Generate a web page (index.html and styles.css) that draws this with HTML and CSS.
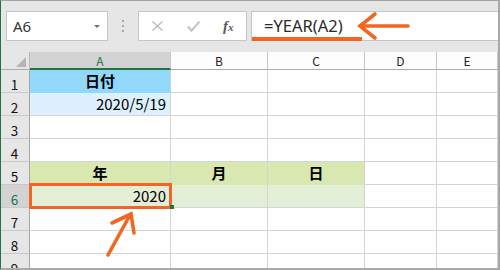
FILE: index.html
```html
<!DOCTYPE html>
<html lang="ja">
<head>
	<meta charset="UTF-8">
	<title>YEAR関数</title>
	<link rel="stylesheet" href="styles.css">
</head>
<body>
<div class="window">
	<!-- name box + formula bar -->
	<div class="toolbar">
		<div class="namebox">
			<span>A6</span>
			<span class="drop"></span>
		</div>
		<div class="grip"><i></i><i></i><i></i></div>
		<div class="fbuttons">
			<svg class="ico" width="11" height="10" viewBox="0 0 11 10"><path d="M0.5 0.5 L10.5 9.5 M10.5 0.5 L0.5 9.5" stroke="#b8b8b8" stroke-width="1.3" fill="none"/></svg>
			<svg class="ico" width="13" height="11" viewBox="0 0 13 11"><path d="M0.8 5.5 L4.6 9.6 L12.4 0.6" stroke="#c4c4c4" stroke-width="2.2" fill="none"/></svg>
			<span class="fx">f<small>x</small></span>
		</div>
		<div class="formula">=YEAR(A2)</div>
	</div>

	<!-- sheet -->
	<div class="sheet">
		<div class="corner"><span class="tri"></span></div>
		<div class="ch active">A</div>
		<div class="ch">B</div>
		<div class="ch">C</div>
		<div class="ch">D</div>
		<div class="ch">E</div>

		<div class="rh">1</div>
		<div class="cell blue bold center">日付</div>
		<div class="cell"></div><div class="cell"></div><div class="cell"></div><div class="cell"></div>

		<div class="rh">2</div>
		<div class="cell lblue right">2020/5/19</div>
		<div class="cell"></div><div class="cell"></div><div class="cell"></div><div class="cell"></div>

		<div class="rh">3</div>
		<div class="cell"></div><div class="cell"></div><div class="cell"></div><div class="cell"></div><div class="cell"></div>

		<div class="rh">4</div>
		<div class="cell"></div><div class="cell"></div><div class="cell"></div><div class="cell"></div><div class="cell"></div>

		<div class="rh">5</div>
		<div class="cell green bold center">年</div>
		<div class="cell green bold center">月</div>
		<div class="cell green bold center">日</div>
		<div class="cell"></div><div class="cell"></div>

		<div class="rh active">6</div>
		<div class="cell lgreen right">2020</div>
		<div class="cell lgreen"></div>
		<div class="cell lgreen"></div>
		<div class="cell"></div><div class="cell"></div>

		<div class="rh">7</div>
		<div class="cell"></div><div class="cell"></div><div class="cell"></div><div class="cell"></div><div class="cell"></div>

		<div class="rh">8</div>
		<div class="cell"></div><div class="cell"></div><div class="cell"></div><div class="cell"></div><div class="cell"></div>

		<div class="rh">9</div>
		<div class="cell"></div><div class="cell"></div><div class="cell"></div><div class="cell"></div><div class="cell"></div>
	</div>
</div>

<!-- annotations drawn over the screenshot -->
<svg class="marks" width="500" height="270" viewBox="0 0 500 270">
	<rect x="252" y="37" width="110" height="4" fill="#f26522"/>
	<g stroke="#f26522" stroke-width="3.6" fill="none" stroke-linecap="round" stroke-linejoin="miter">
		<path d="M375 14 L360 26 L375 38"/>
		<path d="M361 26 L408 26"/>
		<path d="M108 255 L130 215"/>
		<path d="M112 223 L131 214 L134 233"/>
	</g>
	<rect x="30.5" y="184.5" width="140" height="23" stroke="#f26522" stroke-width="3" fill="none"/>
	<rect x="170" y="205" width="4" height="4" fill="#217346"/>
</svg>
</body>
</html>
```

FILE: styles.css
```css
body {
	margin: 0;
	background: #fff;
}
.window {
	width: 500px;
	height: 270px;
	box-sizing: border-box;
	border-top: 1px solid #a3a3a3;
	border-left: 1px solid #217346;
	border-right: 2px solid #a8a8a8;
	border-bottom: 2px solid #a8a8a8;
	background: #e6e6e6;
	overflow: hidden;
	font-family: "Noto Sans CJK JP", sans-serif;
	color: #000;
}

/* toolbar */
.toolbar {
	display: flex;
	align-items: flex-start;
	height: 51px;
	box-sizing: border-box;
	padding: 10px 0 0 5px;
}
.namebox {
	display: flex;
	align-items: center;
	width: 102px;
	height: 30px;
	box-sizing: border-box;
	border: 1px solid #c6c6c6;
	background: #fff;
	padding-left: 6px;
	font-family: "Noto Sans", sans-serif;
	font-size: 15px;
	color: #333;
}
.drop {
	margin-left: auto;
	margin-right: 7px;
	width: 0;
	height: 0;
	border-left: 3px solid transparent;
	border-right: 3px solid transparent;
	border-top: 3px solid #6f6f6f;
}
.grip {
	width: 30px;
	height: 30px;
	display: flex;
	flex-direction: column;
	align-items: center;
	justify-content: center;
	gap: 3px;
}
.grip i {
	width: 2px;
	height: 2px;
	background: #a8a8a8;
}
.fbuttons {
	display: flex;
	align-items: center;
	width: 109px;
	height: 30px;
	box-sizing: border-box;
	border: 1px solid #c6c6c6;
	background: #fff;
	padding-left: 13px;
	gap: 24px;
}
.fx {
	font-family: "Liberation Serif", serif;
	font-style: italic;
	font-weight: bold;
	font-size: 15px;
	color: #5a5a5a;
	margin-left: -1px;
}
.fx small {
	font-size: 11px;
}
.formula {
	flex: 1;
	margin-left: 4px;
	height: 30px;
	box-sizing: border-box;
	border: 1px solid #c6c6c6;
	border-right: none;
	background: #fff;
	padding: 0 0 2px 12px;
	display: flex;
	align-items: center;
	font-family: "Noto Sans", sans-serif;
	font-size: 16.5px;
	color: #2a2a2a;
}

/* grid */
.sheet {
	display: grid;
	grid-template-columns: 29px 141px 97px 97px 72px 1fr;
	grid-template-rows: 18px repeat(9, 23px);
	background: #fff;
}
.sheet > div {
	box-sizing: border-box;
	display: flex;
	min-width: 0;
}
.corner {
	background: #e6e6e6;
	border-right: 1px solid #b8b8b8;
	border-bottom: 1px solid #ababab;
	position: relative;
}
.tri {
	position: absolute;
	right: 3px;
	bottom: 2px;
	width: 0;
	height: 0;
	border-left: 10px solid transparent;
	border-bottom: 10px solid #b4b4b4;
}
.ch {
	justify-content: center;
	align-items: center;
	background: #fdfdfd;
	border-right: 1px solid #c8c8c8;
	border-bottom: 1px solid #ababab;
	font-size: 12px;
	color: #222;
}
.ch.active {
	background: #d3d3d3;
	color: #217346;
	border-bottom: 2px solid #217346;
}
.rh {
	justify-content: center;
	align-items: flex-end;
	padding: 0 1px 1px 0;
	background: #e6e6e6;
	border-right: 1px solid #a6a6a6;
	border-bottom: 1px solid #c8c8c8;
	font-size: 13.5px;
	line-height: 1;
	color: #111;
}
.rh.active {
	background: #d3d3d3;
	color: #217346;
}
.cell {
	align-items: flex-end;
	padding: 0 4px 4px;
	border-right: 1px solid #d4d4d4;
	border-bottom: 1px solid #d4d4d4;
	font-size: 15px;
	line-height: 1;
	white-space: nowrap;
}
.center {
	justify-content: center;
}
.right {
	justify-content: flex-end;
}
.bold {
	font-weight: bold;
	font-size: 15px;
}
.blue {
	background: #92d8fb;
	border-bottom-color: #92d8fb;
}
.lblue {
	background: #ddf0fe;
}
.green {
	background: #d8e8b0;
	border-bottom-color: #d8e8b0;
}
.lgreen {
	background: #e2efd6;
}

/* annotation layer */
.marks {
	position: absolute;
	left: 0;
	top: 0;
}
```
